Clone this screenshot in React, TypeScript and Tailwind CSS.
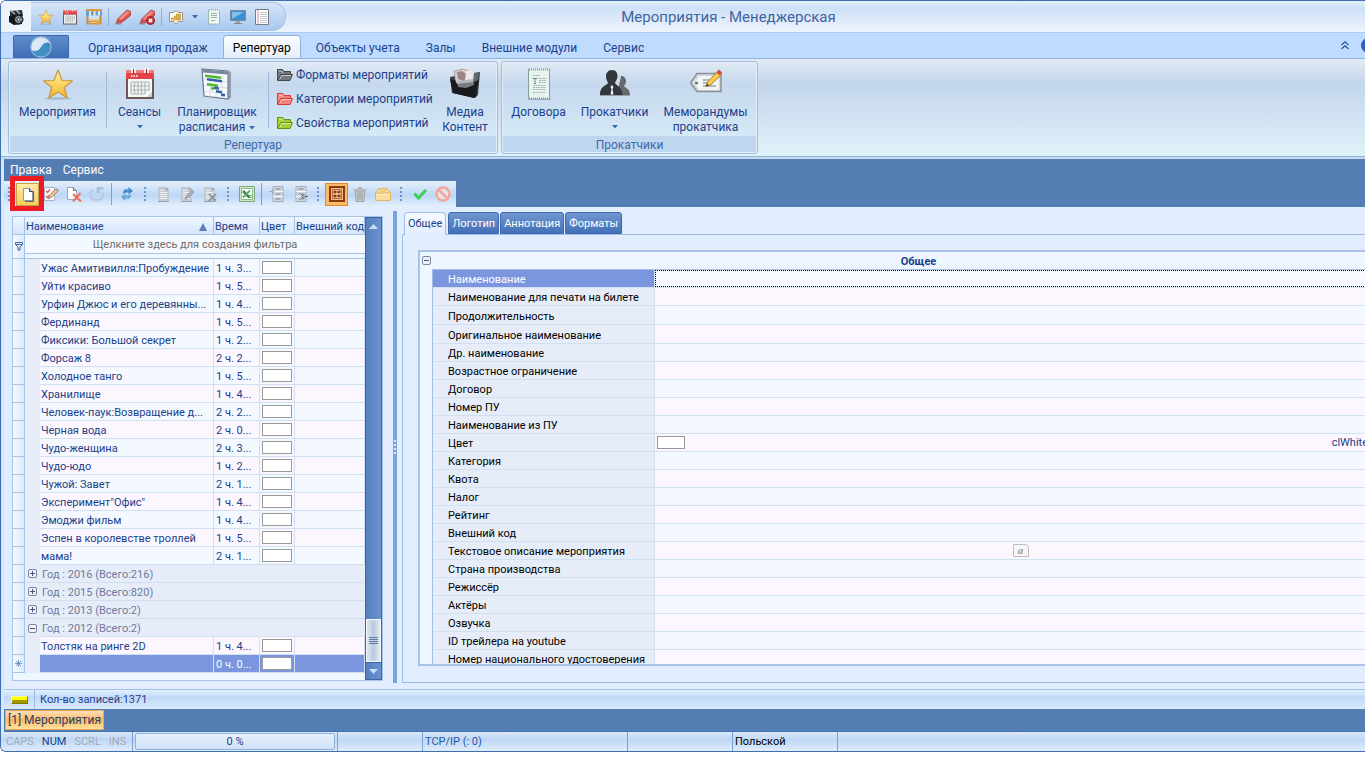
import { useState, type ReactNode } from 'react'

interface Movie { name: string; time: string }

const movies: Movie[] = [
  { name: 'Ужас Амитивилля:Пробуждение', time: '1 ч. 3...' },
  { name: 'Уйти красиво', time: '1 ч. 5...' },
  { name: 'Урфин Джюс и его деревянны...', time: '1 ч. 4...' },
  { name: 'Фердинанд', time: '1 ч. 5...' },
  { name: 'Фиксики: Большой секрет', time: '1 ч. 2...' },
  { name: 'Форсаж 8', time: '2 ч. 2...' },
  { name: 'Холодное танго', time: '1 ч. 5...' },
  { name: 'Хранилище', time: '1 ч. 4...' },
  { name: 'Человек-паук:Возвращение д...', time: '2 ч. 2...' },
  { name: 'Черная вода', time: '2 ч. 0...' },
  { name: 'Чудо-женщина', time: '2 ч. 3...' },
  { name: 'Чудо-юдо', time: '1 ч. 2...' },
  { name: 'Чужой: Завет', time: '2 ч. 1...' },
  { name: 'Эксперимент"Офис"', time: '1 ч. 4...' },
  { name: 'Эмоджи фильм', time: '1 ч. 4...' },
  { name: 'Эспен в королевстве троллей', time: '1 ч. 5...' },
  { name: 'мама!', time: '2 ч. 1...' },
]

const groups = [
  { label: 'Год : 2016 (Всего:216)', open: false },
  { label: 'Год : 2015 (Всего:820)', open: false },
  { label: 'Год : 2013 (Всего:2)', open: false },
  { label: 'Год : 2012 (Всего:2)', open: true },
]

const fields = [
  'Наименование', 'Наименование для печати на билете', 'Продолжительность', 'Оригинальное наименование',
  'Др. наименование', 'Возрастное ограничение', 'Договор', 'Номер ПУ', 'Наименование из ПУ', 'Цвет',
  'Категория', 'Квота', 'Налог', 'Рейтинг', 'Внешний код', 'Текстовое описание мероприятия',
  'Страна производства', 'Режиссёр', 'Актёры', 'Озвучка', 'ID трейлера на youtube', 'Номер национального удостоверения',
]

const ribbonTabs = ['Организация продаж', 'Репертуар', 'Объекты учета', 'Залы', 'Внешние модули', 'Сервис']
const detailTabs = ['Общее', 'Логотип', 'Аннотация', 'Форматы']

/* ---------- icons ---------- */

function Svg({ size = 16, children }: { size?: number; children: ReactNode }) {
  return <svg width={size} height={size} viewBox={`0 0 ${size} ${size}`} fill="none" aria-hidden="true" className="shrink-0">{children}</svg>
}

function Star({ size = 16 }: { size?: number }) {
  return (
    <svg width={size} height={size} viewBox="0 0 32 32" aria-hidden="true" className="shrink-0">
      <defs>
        <linearGradient id="starFill" x1="0" y1="0" x2="0" y2="1">
          <stop offset="0" stopColor="#fff3b0" /><stop offset="0.6" stopColor="#fbcf55" /><stop offset="1" stopColor="#f0b03c" />
        </linearGradient>
      </defs>
      <ellipse cx="16" cy="30.5" rx="14" ry="1.2" fill="#8f9db0" opacity=".6" />
      <path d="M16 2l4 10.5 10.500.3-8.300 6.700 3 10.500L16 24l-9.200 6 3-10.500L1.500 12.800 12 12.500z" fill="url(#starFill)" stroke="#c9983c" strokeWidth="1.200" strokeLinejoin="round" />
    </svg>
  )
}

function Calendar({ size = 16 }: { size?: number }) {
  return (
    <svg width={size} height={size} viewBox="0 0 32 32" aria-hidden="true" className="shrink-0">
      <path d="M2 3h28v28H2z" fill="#6d5559" />
      <path d="M4 11h24v18H4z" fill="#f6f8f4" />
      <path d="M2 2h28v9H2z" fill="#e2434a" />
      <path d="M2 2h28v3H2z" fill="#f07b7b" />
      <path d="M7 14h18M7 18h18M7 22h18M7 26h14M7 14v12M10.500 14v12M14 14v12M17.500 14v12M21 14v12M25 14v9" stroke="#a9b7b3" strokeWidth="1.200" fill="none" />
      <path d="M23 29l5-5v5z" fill="#c9cfcd" />
      <path d="M7 8h7" stroke="#fff" strokeWidth="1.500" strokeDasharray="1.500 1" />
      <path d="M8 0v5M11 0v5M21 0v5M24 0v5" stroke="#fff" strokeWidth="1.600" />
      <path d="M9.500 1v5M22.500 1v5" stroke="#9b2b34" strokeWidth="1" />
    </svg>
  )
}

function Planner() {
  return (
    <Svg size={32}>
      <path d="M28 3l2 1v26l-3 1z" fill="#8f9cac" />
      <path d="M1 1l26 2v28L3 28z" fill="#f7fafc" stroke="#66758a" strokeWidth="1.200" />
      <path d="M2 1.500l25 2v3l-25-2z" fill="#7487a0" />
      <path d="M9 6v23M15 7v22M21 7v23M3 11l23 3M3 17l23 3M3 23l23 3" stroke="#d5dde6" />
      <path d="M4 6.500l16 2v2.500l-16-2z" fill="#54b72b" />
      <path d="M6 10l15 2v2.500L6 12.500z" fill="#2f62a5" />
      <path d="M6 15l11 1.500V19L6 17.500z" fill="#54b72b" />
      <path d="M13 18.500l5 .8v2.500l-5-.8z" fill="#2f62a5" />
      <path d="M10 19l3 .4v2.500l-3-.4z" fill="#54b72b" />
      <path d="M15 22l6 1v2.500l-6-1z" fill="#2f62a5" />
      <path d="M20 25.500l4 .6v2.500l-4-.6z" fill="#2f62a5" />
    </Svg>
  )
}

function Folder({ dark, light }: { dark: string; light: string }) {
  return (
    <svg width="16" height="14" viewBox="0 0 16 14" fill="none" aria-hidden="true" className="shrink-0">
      <path d="M.5 12.500v-11h5l1.500 2h6.500v3" fill={light} stroke={dark} />
      <path d="M.8 12.500L4 6.500h11.500l-2.500 6z" fill={light} stroke={dark} strokeLinejoin="round" />
      <path d="M2.500 11.500l2.200-4h9.300M2 3h2.500l1.500 2" stroke="#fff" opacity=".6" />
    </svg>
  )
}

function MediaFolder() {
  return (
    <Svg size={32}>
      <path d="M1 9l5-1v16l20 4V5l5-1-2 23-3 3L3 25z" fill="#3c4148" />
      <path d="M5 3l9-2 6 2-2 14-11-1z" fill="#d9cfd0" stroke="#8b8385" strokeWidth=".6" />
      <path d="M8 4l5-1 5 4-3 6-6-2z" fill="#9b8588" />
      <path d="M17 3l7-1-1 14-7-1z" fill="#ece8e6" />
      <path d="M1 11l5 1 2 4 16-2 6-5-3 19-2 2L4 25z" fill="#17191d" />
      <path d="M8 13l16-2 1 6-8 3-8-1z" fill="#a3a8ad" opacity=".7" />
      <path d="M25 5l5-1-1 8-5 3z" fill="#5f666e" />
    </Svg>
  )
}

function Contract() {
  return (
    <Svg size={32}>
      <path d="M6 1h21v29H6z" fill="#e8f2ef" />
      <path d="M5.500 1v29.500M26.500 1v29.500" stroke="#7fa09b" />
      <path d="M6 1.500h21M6 30.500h21" stroke="#7fa09b" strokeWidth="2" strokeDasharray="1 1" />
      <path d="M9.500 10.500h5M12 10v5M11 15.500h2" stroke="#6f8d89" />
      <path d="M16 10.500h7M16 12.500h7M16 14.500h7M10 17.500h13M10 19.500h13M10 21.500h13M10 24.500h13M10 7.500h7" stroke="#a3b9b5" strokeDasharray="2 .6" />
      <path d="M5 31.500h23" stroke="#7b8a92" opacity=".5" />
    </Svg>
  )
}

function People() {
  return (
    <Svg size={32}>
      <path d="M22 8c3 0 5 2 5 5 0 2-1 4-2 5 1 2 6 2 6 9H18z" fill="#666a6f" />
      <path d="M13 2c4 0 5.500 3 5.500 6s-1.500 5-2.500 6.500c0 3 7 3 7.500 12.500H1c0-10 8-9.500 8-12.500C8 13 7 11 7 8s2-6 6-6z" fill="#33363b" />
      <path d="M13 17l1.500 2-1 2 1 5.500h-3l1-5.500-1-2z" fill="#f4f6f8" />
      <path d="M1 27.500h30" stroke="#6d7883" opacity=".6" />
    </Svg>
  )
}

function TagPencil() {
  return (
    <Svg size={32}>
      <path d="M.5 15l6.500-9.500h24v18H7z" fill="#d5d8dc" stroke="#8b9096" strokeWidth="1.500" />
      <path d="M4 15l5.500-7H29v14H9.500z" fill="#f3f4f5" />
      <circle cx="6.500" cy="15" r="1.600" fill="#6c7279" />
      <path d="M13 12h9M13 15h6M13 18h13" stroke="#787e85" />
      <path d="M16 18.500l2-5L28 3l3.500 3.500-10.500 10z" fill="#f7cf4b" stroke="#ac7f2c" />
      <path d="M26.500 4.500L29 1.500l3 3-2.500 3z" fill="#d9484f" />
      <path d="M16 18.500l1-3 2 2z" fill="#4c3b22" />
    </Svg>
  )
}

function Page() {
  return (
    <Svg>
      <path d="M13 5v10H5" stroke="#2d3f63" strokeWidth="1.600" />
      <path d="M3.500 2.500h6l3 3v9h-9z" fill="#fff" stroke="#8d9bb3" />
      <path d="M9.500 2.500v3h3" fill="#c9d4e4" stroke="#2d3f63" />
    </Svg>
  )
}

function PageEdit() {
  return (
    <Svg>
      <path d="M1.500 1.500h10v13h-10z" fill="#fafbfe" stroke="#a7b3c7" />
      <path d="M3 5l1.500 1.500L7 3.500M3 10l1.500 1.500L6 9.500" stroke="#dc5a55" strokeWidth="1.300" />
      <path d="M5 13l1.500-4L13 2.500l2.500 2L9 11z" fill="#f3c08b" stroke="#8d7361" strokeWidth=".8" />
      <path d="M12 3.500l1.500-1.500 2.500 2-1.500 1.500z" fill="#b9a2a4" />
    </Svg>
  )
}

function PageDelete() {
  return (
    <Svg>
      <path d="M1.500 1.500h6l3 3v9h-9z" fill="#fff" stroke="#9aa8bf" />
      <path d="M7.500 1.500v3h3" stroke="#5f708f" />
      <path d="M7 8l8 7.500M14.500 7L7 15.500" stroke="#f2705c" strokeWidth="2" />
    </Svg>
  )
}

function MutedPage({ accent }: { accent?: 'edit' | 'delete' }) {
  return (
    <Svg>
      <path d="M2 1h8l3 3v11H2z" fill="#c3c9d0" />
      <path d="M10 1v3h3z" fill="#9ba2aa" />
      <path d="M4 4.500h4M4 6.500h7M4 8.500h7M4 10.500h7M4 12.500h7" stroke="#f0f2f4" />
      <path d="M2 15.500h11" stroke="#9ba2aa" />
      {accent === 'edit' && <path d="M6 13l1.500-3.500L13 4l2 2-5.500 5.500z" fill="#aab0b7" stroke="#8e959d" strokeWidth=".8" />}
      {accent === 'delete' && <path d="M7 8l7 7M14 8l-7 7" stroke="#939aa2" strokeWidth="2" />}
    </Svg>
  )
}

function Marker({ remove }: { remove?: boolean }) {
  return (
    <Svg>
      <path d="M1 14.500L3 9.500 12 1l3.500 1.500v4L6 14z" fill="#d8514c" stroke="#a73a38" strokeWidth=".7" />
      <path d="M3.500 9.500L12 2l3 1-8.500 8z" fill="#ee8b80" />
      <path d="M0 15h6" stroke="#7d8aa0" />
      {remove && <circle cx="11.500" cy="11.500" r="4" fill="#c8323c" stroke="#8e1f28" />}
      {remove && <path d="M9.800 9.800l3.400 3.400M13.200 9.800l-3.400 3.400" stroke="#fff" strokeWidth="1.500" />}
    </Svg>
  )
}

function Cabinet({ mark }: { mark: 'left' | 'right' }) {
  return (
    <Svg>
      <path d="M4 .500h10v15H4z" fill="#d3d8dd" stroke="#a3abb4" />
      <path d="M4 5.500h10M4 10.500h10" stroke="#f5f7f9" />
      <path d="M6.500 3h5M6.500 8h5M6.500 13h5" stroke="#949da7" strokeWidth="1.400" />
      {mark === 'left' && <path d="M0 5.500h3M3.500 3.500v4l2.500-2z" stroke="#a3abb4" fill="#fff" />}
      {mark === 'right' && <path d="M16 10.500h-3M12 8.500v4L9 10.500z" stroke="#5e6a78" fill="#e7eaed" />}
    </Svg>
  )
}

const Camera = () => (
  <Svg size={18}>
    <path d="M3 3l12-1 1 6-13 2z" fill="#2b2f33" />
    <path d="M2 8l13-2v10l-8 1-5-3z" fill="#15181b" />
    <path d="M3 2l5 4M9 2l4 4" stroke="#b9c3ca" strokeWidth="1.200" />
    <circle cx="11.500" cy="11.500" r="4.500" fill="#4b545b" stroke="#111" />
    <circle cx="11.500" cy="11.500" r="2.700" stroke="#dfe5e9" strokeDasharray="1.500 1" />
    <circle cx="11.500" cy="11.500" r="1" fill="#f2f5f6" />
  </Svg>
)

const Shop = () => (
  <Svg>
    <path d="M1.500 6v9.500M14.500 6v9.500" stroke="#c88b3c" strokeWidth="2" />
    <path d="M3 10h10v2H3z" fill="#f0c27c" />
    <path d="M3 12h10v3.500H3z" fill="#d58e38" />
    <path d="M3 6h10v4H3z" fill="#cfe6f7" />
    <path d="M0 0h16v2H0z" fill="#dd9a43" />
    <path d="M0 2h16v4H0z" fill="#f8e6c4" />
    <path d="M0 2h3v4.500H0zM5 2h2.500v4.500H5zM9.500 2H12v4.500H9.500zM14 2h2v4.500h-2z" fill="#5ea2dc" />
    <path d="M4 13.500h8" stroke="#f5d39a" />
  </Svg>
)

const ChartTag = () => (
  <Svg>
    <path d="M1.500 3.500h4l2.500-2 2.500 2h4v9h-4l-2.500 2.500-2.500-2.500h-4z" fill="#fdfaf2" stroke="#9a9282" />
    <path d="M3.500 11v-2h3v-2h2v-2h4v6z" fill="#efc56a" stroke="#c4993f" strokeWidth=".8" />
    <path d="M6.500 9h6M8.500 7h4M8.500 7v4M10.500 5v6" stroke="#c4993f" strokeWidth=".7" />
  </Svg>
)

const Receipt = () => (
  <Svg>
    <path d="M2.500 1v14.500M13.500 1v14.500" stroke="#9db8b1" />
    <path d="M3 1h10v14H3z" fill="#eef6f2" />
    <path d="M3 1h10M3 15h10" stroke="#7d9b93" strokeDasharray="1 1" />
    <path d="M5 4.500h6M5 6.500h6M5 8.500h6M5 11.500h4" stroke="#9db4ae" />
  </Svg>
)

const Monitor = () => (
  <Svg>
    <path d="M.5 1.500h15v10H.5z" fill="#3b8fd0" stroke="#7f8a96" />
    <path d="M2 3h12L2 10z" fill="#7fc0ea" />
    <path d="M6 12h4v2H6z" fill="#98a3ad" />
    <path d="M4 14.500h8" stroke="#7f8a96" />
  </Svg>
)

const Notes = () => (
  <Svg>
    <path d="M1.500.5h13v15h-13z" fill="#fff" stroke="#767a86" />
    <path d="M6 3.500h7M6 5.500h7M6 7.500h7M6 9.500h7M6 11.500h7M6 13.500h7" stroke="#b4b8c2" strokeWidth=".8" />
    <path d="M4 1v14" stroke="#d98a90" />
  </Svg>
)

const Undo = () => (
  <Svg>
    <path d="M3.500 4A6 6 0 1 0 13 6" stroke="#a9bdd8" strokeWidth="2.600" />
    <path d="M3.500 4A6 6 0 1 0 13 6" stroke="#e4ecf6" strokeWidth=".8" />
    <path d="M8 6.500v-5h6V3H10.500v3.500z" fill="#b9cae0" stroke="#9db1cd" strokeWidth=".7" />
  </Svg>
)

const Refresh = () => (
  <Svg>
    <path d="M4 7.500V5.500L6.500 3h3V1l4.500 4-4.500 3.500V6.500H7z" fill="#3f86c8" />
    <path d="M12 8.500v2L9.500 13h-3v2L2 11l4.500-3.500v2H9z" fill="#63a6dc" />
    <path d="M7 4h3M9 12H6" stroke="#b6d8f2" strokeWidth=".8" />
  </Svg>
)

const Excel = () => (
  <Svg>
    <path d="M.5.500h15v15H.5z" fill="#cfe5cd" stroke="#7aa878" />
    <path d="M2.500 2.500h11v11h-11z" fill="#fff" stroke="#8fba8d" />
    <path d="M4 5l6.500 6.500" stroke="#3a8a42" strokeWidth="2.600" />
    <path d="M11 4.500L4 11.500" stroke="#63a866" strokeWidth="2" />
    <path d="M10 9.500h3M10 11.500h3" stroke="#7cb37b" />
  </Svg>
)

const Abacus = () => (
  <Svg>
    <path d="M1 1h14v14H1z" fill="#f3bd8a" stroke="#8c3b10" strokeWidth="2" />
    <path d="M3.500 3.500h9v9h-9z" stroke="#c2693a" />
    <path d="M4 6h8M4 10h8" stroke="#8c3b10" />
    <path d="M5 6h2M9 6h2M5 10h2M9 10h2" stroke="#8c3b10" strokeWidth="2.400" />
  </Svg>
)

const Trash = () => (
  <Svg>
    <path d="M3 5h10l-1 10.500H4z" fill="#c3c5c7" stroke="#a5a8ab" />
    <path d="M1.500 3h13v1.500h-13zM6 1h4v2H6z" fill="#b3b6b9" />
    <path d="M6 6.500v7M8 6.500v7M10 6.500v7" stroke="#999da1" />
  </Svg>
)

const Box = () => (
  <Svg>
    <path d="M.5 7L4 2.500h8L15.500 7v7.500H.5z" fill="#f9dea0" stroke="#e2b45f" />
    <path d="M.5 7h15M4 2.500l2 2.500h4l2-2.500" stroke="#e2b45f" />
    <path d="M2 8.500h12" stroke="#fff1cc" />
  </Svg>
)

const Check = () => <Svg><path d="M2.500 7.500L6.500 12l7.500-8" stroke="#3fcf55" strokeWidth="3" /></Svg>

const Forbidden = () => (
  <Svg>
    <circle cx="8" cy="8" r="6.500" fill="#e9e3ea" stroke="#f3a49b" strokeWidth="2.400" />
    <path d="M3.500 3.500l9 9" stroke="#f3a49b" strokeWidth="2.500" />
  </Svg>
)

const Caret = () => <svg width="6" height="4" viewBox="0 0 6 4" aria-hidden="true" className="shrink-0"><path d="M0 0h6L3 3.500z" fill="#3d6bb3" /></svg>

function Expander({ open }: { open?: boolean }) {
  return (
    <svg width="9" height="9" viewBox="0 0 9 9" fill="none" aria-hidden="true">
      <rect x=".5" y=".5" width="8" height="8" rx="1.500" fill="#eef0f7" stroke="#7d86a3" />
      <path d={open ? 'M2 4.500h5' : 'M2 4.500h5M4.500 2v5'} stroke="#4a5578" />
    </svg>
  )
}

/* ---------- ribbon ---------- */

function BigButton({ icon, lines, caret, width }: { icon: ReactNode; lines: string[]; caret?: 'inline' | 'below'; width: string }) {
  return (
    <button className={`flex flex-col items-center pt-[6px] text-[12px] leading-[15px] whitespace-nowrap ${width}`}>
      {icon}
      <span className="mt-[5px]">{lines[0]}</span>
      {lines[1] && <span className="flex items-center gap-1">{lines[1]}{caret === 'inline' && <Caret />}</span>}
      {caret === 'below' && <span className="mt-[5px]"><Caret /></span>}
    </button>
  )
}

function RibbonGroup({ title, children }: { title: string; children: ReactNode }) {
  return (
    <section className="flex flex-col rounded-[3px] border border-[#9fbfdf] bg-linear-to-b from-[#e0eaf4] via-[#c5d8ee] via-25% to-[#dbeef8] shadow-[inset_0_0_0_1px_#e4eef8]">
      <div className="flex h-[74px]">{children}</div>
      <h2 className="mx-px mb-px h-[16px] bg-[#bfd6ef] text-center text-[12px] leading-[18px] text-[#3e6aaa]">{title}</h2>
    </section>
  )
}

function Separator() {
  return <span className="mt-[10px] h-[56px] w-px bg-[#9ebbdd]" />
}

/* ---------- toolbar ---------- */

function ToolSegment({ children }: { children: ReactNode }) {
  return (
    <div className="flex h-[26px] items-center bg-linear-to-b from-[#e6f0fc] via-[#bdd7f6] via-55% to-[#e4f0fd] pr-[2px]">
      <span className="flex w-[12px] flex-col gap-[2px] pl-[4px]">
        {[0, 1, 2, 3].map(i => <i key={i} className="h-[2px] w-[2px] bg-[#6f96cc]" />)}
      </span>
      {children}
    </div>
  )
}

function Tool({ label, active, children }: { label: string; active?: 'yellow' | 'orange'; children: ReactNode }) {
  const look = active === 'yellow'
    ? 'border border-[#c2a24c] bg-linear-to-b from-[#fdeaa6] to-[#f6cf57]'
    : active === 'orange' ? 'border border-[#e08a2c] bg-[#fcb968]' : ''
  return (
    <button aria-label={label} title={label} className={`flex h-[23px] w-[23px] items-center justify-center ${look}`}>
      {children}
    </button>
  )
}

/* ---------- grid ---------- */

function GridCells({ row }: { row: Movie }) {
  const line = 'border-r border-b border-[#d0e0f0] p-0'
  return (
    <>
      <td className={`${line} overflow-hidden pt-[2px] pl-px leading-[15px] whitespace-nowrap`}>{row.name}</td>
      <td className={`${line} overflow-hidden pt-[2px] pl-[2px] leading-[15px] whitespace-nowrap`}>{row.time}</td>
      <td className={line}><div className="mx-auto h-[13px] w-[30px] border border-[#999] bg-white" /></td>
      <td className={line} />
    </>
  )
}

function MovieGrid() {
  const [filter, setFilter] = useState('')
  const gutter = 'border-r border-b border-[#a6c4e8] bg-linear-to-r from-[#f4f9ff] to-[#dbeafb] p-0'
  return (
    <div className="flex border border-[#a9c4e6] bg-[#eef6ff]">
      <div className="w-[352px] text-[11px] leading-[17px] text-[#1c4089]">
        <table className="w-full table-fixed border-separate border-spacing-0">
          <colgroup>
            <col className="w-[12px]" /><col className="w-[15px]" /><col className="w-[174px]" />
            <col className="w-[46px]" /><col className="w-[35px]" /><col className="w-[70px]" />
          </colgroup>
          <thead>
            <tr className="h-[18px] bg-linear-to-b from-[#eff6ff] to-[#d3e5fb] text-left leading-[15px] [&>th]:border-r [&>th]:border-b [&>th]:border-[#a6c4e8] [&>th]:p-0 [&>th]:pt-[2px] [&>th]:pl-px [&>th]:font-normal">
              <th />
              <th colSpan={2} aria-sort="ascending">
                <span className="flex items-center justify-between pr-[6px]">
                  Наименование
                  <svg width="8" height="8" viewBox="0 0 8 8" aria-hidden="true"><path d="M4 0l4 8H0z" fill="#5b7fb5" /></svg>
                </span>
              </th>
              <th>Время</th>
              <th>Цвет</th>
              <th className="whitespace-nowrap">Внешний код</th>
            </tr>
            <tr className="h-[19px]">
              <td rowSpan={2} className={gutter}>
                <svg width="8" height="9" viewBox="0 0 8 9" fill="none" className="mx-auto" aria-hidden="true"><path d="M.5.500h7v2L5 5v3H3V5L.5 2.500zM1 2.500h6" stroke="#41659f" /></svg>
              </td>
              <td colSpan={5} className="border-b border-[#a6c4e8] bg-[#f4f9ff] p-0">
                <input
                  aria-label="Фильтр"
                  value={filter}
                  onChange={e => setFilter(e.target.value)}
                  placeholder="Щелкните здесь для создания фильтра"
                  className="block h-[18px] w-full bg-transparent text-center outline-none placeholder:text-[#6d6d6d] placeholder:opacity-100"
                />
              </td>
            </tr>
            <tr className="h-[5px]"><td colSpan={5} className="border-b border-[#a6c4e8] p-0 leading-[0]" /></tr>
          </thead>
          <tbody>
            {movies.map((m, i) => (
              <tr key={m.name} className={`h-[18px] ${i % 2 ? 'bg-[#fcf7fe]' : 'bg-[#f3f9ff]'}`}>
                <td className={gutter} />
                <td className="bg-[#e6edf8] p-0" />
                <GridCells row={m} />
              </tr>
            ))}
            {groups.map(g => (
              <tr key={g.label} className="h-[18px] bg-[#e6edf8] text-[#6f7a9c]">
                <td className={gutter} />
                <td className={`p-0 pl-[3px] ${g.open ? '' : 'border-b border-[#d0e0f0]'}`}>
                  <button aria-label={g.open ? 'Свернуть' : 'Развернуть'} className="block"><Expander open={g.open} /></button>
                </td>
                <td colSpan={4} className="border-b border-[#d0e0f0] p-0 pt-[2px] pl-[2px] leading-[15px]">{g.label}</td>
              </tr>
            ))}
            <tr className="h-[18px] bg-[#fcf7fe]">
              <td className={gutter} />
              <td className="bg-[#e6edf8] p-0" />
              <GridCells row={{ name: 'Толстяк на ринге 2D', time: '1 ч. 4...' }} />
            </tr>
            <tr className="h-[18px] bg-[#7b96df] text-white">
              <td className={gutter}>
                <svg width="7" height="7" viewBox="0 0 7 7" className="mx-auto" aria-hidden="true"><path d="M3.500 0v7M0 3.500h7M1 1l5 5M6 1L1 6" stroke="#41659f" strokeWidth=".6" /></svg>
              </td>
              <td className="bg-[#e6edf8] p-0" />
              <GridCells row={{ name: '', time: '0 ч. 0...' }} />
            </tr>
          </tbody>
        </table>
      </div>
      <div className="flex w-[17px] flex-col border border-[#3c669f] bg-linear-to-r from-[#557fbd] to-[#6a94d0]">
        <button aria-label="Вверх" className="flex h-[16px] items-center justify-center"><svg width="9" height="5" viewBox="0 0 9 5"><path d="M0 5h9L4.500 0z" fill="#c9dcf3" /></svg></button>
        <div className="flex-1" />
        <div className="flex h-[43px] flex-col items-center justify-center gap-px border border-[#f4f8fd] bg-linear-to-r from-[#dde6f0] via-[#b9cadd] to-[#e3ebf4]">
          {[0, 1, 2, 3].map(i => <i key={i} className="h-px w-[9px] bg-[#5b7ba8]" />)}
        </div>
        <button aria-label="Вниз" className="flex h-[17px] items-center justify-center border-t border-[#3c669f]"><svg width="9" height="5" viewBox="0 0 9 5"><path d="M0 0h9L4.500 5z" fill="#c9dcf3" /></svg></button>
      </div>
    </div>
  )
}

function fieldHeight(name: string) {
  return name === 'Продолжительность' || name === 'Оригинальное наименование' ? 'h-[19px]' : 'h-[18px]'
}

function Details() {
  return (
    <div className="ml-[15px] flex h-[416px] w-[calc(100%+8px)] flex-col overflow-hidden border-2 border-[#a9c4e6] bg-[#eef6ff] text-[11px] leading-[17px]">
      <div className="flex h-[17px] shrink-0 items-center">
        <button aria-label="Свернуть" className="ml-[2px]"><Expander open /></button>
        <h3 className="flex-1 pt-px pl-5 text-center font-bold text-[#15428b]">Общее</h3>
      </div>
      <table className="ml-[12px] table-fixed border-separate border-spacing-0 border-t border-l border-[#a3bfe2]">
        <colgroup><col className="w-[222px]" /><col /></colgroup>
        <tbody>
          {fields.map((name, i) => (
            <tr key={name} className={fieldHeight(name)}>
              <th scope="row" className={`border-r border-b border-[#cfe0f1] p-0 pt-[2px] pl-[15px] text-left leading-[15px] font-normal whitespace-nowrap ${i === 0 ? 'bg-[#7b96df] text-white' : 'bg-[#e6edf8] text-black'}`}>
                {name}
              </th>
              <td className={`border-b border-[#cfe0ee] p-0 ${i % 2 ? 'bg-[#fcf7fe]' : 'bg-[#f3f9ff]'}`}>
                {i === 0 && <input aria-label={name} className="block h-[17px] w-full border border-dotted border-black bg-[#f7faff] px-1 outline-none" />}
                {name === 'Цвет' && (
                  <div className="flex items-center justify-between pr-[18px] pl-[2px] text-[#1c4089]">
                    <span className="h-[13px] w-[28px] border border-[#999] bg-white" />
                    <span>clWhite</span>
                  </div>
                )}
                {name === 'Текстовое описание мероприятия' && (
                  <span className="mx-auto flex h-[13px] w-[16px] items-center justify-center rounded-tr-[4px] border border-[#bdbdbd] bg-[#f7f7f7] font-['Liberation_Serif',serif] leading-[11px] font-bold text-[#999] italic">a</span>
                )}
              </td>
            </tr>
          ))}
        </tbody>
      </table>
    </div>
  )
}

export default function App() {
  const [ribbonTab, setRibbonTab] = useState('Репертуар')
  const [detailTab, setDetailTab] = useState('Общее')

  return (
    <div className="min-h-screen w-full overflow-hidden bg-white font-[Roboto,'Noto_Sans',sans-serif] text-[#1d3f8c]">
      <div className="flex flex-col overflow-hidden rounded-l-[6px] border-y border-l border-[#3f6fae] bg-[#d6e6fb]">

        {/* Title bar with quick access */}
        <header className="flex h-[32px] items-center border-b border-[#a9cbf3] bg-linear-to-b from-[#e3effb] via-[#cfe1f8] via-25% to-[#edf4fd]">
          <div className="flex h-full w-[30px] items-center justify-center bg-[#edf4fd]"><Camera /></div>
          <nav className="flex h-[29px] items-center rounded-r-[14px] border-y border-r border-[#a3c0e4] bg-linear-to-b from-[#d6e5f8] to-[#a9c8ee] pr-[11px] pl-[3px] [&>button]:flex [&>button]:h-[24px] [&>button]:w-[24px] [&>button]:items-center [&>button]:justify-center">
            <button aria-label="Мероприятия"><Star /></button>
            <button aria-label="Сеансы"><Calendar /></button>
            <button aria-label="Кассы"><Shop /></button>
            <span className="mx-[2px] h-[18px] w-px bg-[#8fb0da]" />
            <button aria-label="Отметить"><Marker /></button>
            <button aria-label="Снять отметку"><Marker remove /></button>
            <span className="mx-[2px] h-[18px] w-px bg-[#8fb0da]" />
            <button aria-label="Отчеты"><ChartTag /></button>
            <span className="flex w-[14px] justify-center"><Caret /></span>
            <button aria-label="Договора"><Receipt /></button>
            <button aria-label="Экран"><Monitor /></button>
            <button aria-label="Журнал"><Notes /></button>
          </nav>
          <h1 className="flex-1 pt-[2px] pr-[194px] text-center text-[15px] text-[#41659f]">Мероприятия - Менеджерская</h1>
        </header>

        {/* Ribbon tabs */}
        <div className="flex h-[26px] items-end border-b border-[#8db2e3] bg-[#bfdbff] pl-[12px] text-[12px]">
          <button aria-label="Меню" className="mr-[6px] flex h-[23px] w-[56px] items-center justify-center rounded-t-[2px] border border-b-0 border-[#3c66a8] bg-linear-to-b from-[#5e8ccb] to-[#3f6db5]">
            <svg width="22" height="22" viewBox="0 0 22 22" aria-hidden="true">
              <circle cx="11" cy="11" r="10.500" fill="#dbe9f5" />
              <path d="M21.500 11A10.500 10.500 0 0 1 1 14c4 2 8 1 10-3s6-6 9-3.500c1 1 1.500 2 1.500 3.500z" fill="#3f8fc4" />
              <circle cx="11" cy="11" r="10" fill="none" stroke="#8db9dd" />
            </svg>
          </button>
          {ribbonTabs.map(tab => (
            <button
              key={tab}
              onClick={() => setRibbonTab(tab)}
              className={ribbonTab === tab
                ? 'mx-[2px] h-[23px] rounded-t-[4px] border border-b-0 border-[#8db2e3] bg-linear-to-b from-[#fbfdff] to-[#e6eef7] px-[9px] pt-px text-black'
                : 'h-[23px] px-[13px] pt-[2px]'}
            >
              {tab}
            </button>
          ))}
          <div className="-mr-[12px] ml-auto flex items-center gap-[12px] self-center">
            <button aria-label="Свернуть ленту"><svg width="8" height="9" viewBox="0 0 8 9" fill="none"><path d="M.5 4L4 .8 7.500 4M.5 8L4 4.800 7.500 8" stroke="#2f62a5" strokeWidth="1.400" /></svg></button>
            <button aria-label="Справка" className="h-[15px] w-[16px] rounded-full bg-[#2f5fc4]" />
          </div>
        </div>

        {/* Ribbon */}
        <div className="flex gap-[3px] bg-linear-to-b from-[#e3ebf3] via-[#c4d6ec] via-25% to-[#e0f2f9] pt-[2px] pb-[2px] pl-[7px]">
          <RibbonGroup title="Репертуар">
            <BigButton width="w-[97px]" icon={<Star size={32} />} lines={['Мероприятия']} />
            <Separator />
            <BigButton width="w-[65px]" icon={<Calendar size={32} />} lines={['Сеансы']} caret="below" />
            <BigButton width="w-[90px]" icon={<Planner />} lines={['Планировщик', 'расписания']} caret="inline" />
            <span className="w-[6px]" />
            <Separator />
            <div className="flex w-[164px] flex-col pt-px pl-[8px] text-[12px] whitespace-nowrap [&>button]:flex [&>button]:h-[24px] [&>button]:items-center [&>button]:gap-[3px]">
              <button><Folder dark="#45484d" light="#75797f" />Форматы мероприятий</button>
              <button><Folder dark="#d93a34" light="#f5837c" />Категории мероприятий</button>
              <button><Folder dark="#5c9612" light="#a5d02f" />Свойства мероприятий</button>
            </div>
            <BigButton width="w-[64px]" icon={<MediaFolder />} lines={['Медиа', 'Контент']} />
          </RibbonGroup>
          <RibbonGroup title="Прокатчики">
            <BigButton width="w-[73px]" icon={<Contract />} lines={['Договора']} />
            <BigButton width="w-[79px]" icon={<People />} lines={['Прокатчики']} caret="below" />
            <BigButton width="w-[103px]" icon={<TagPencil />} lines={['Меморандумы', 'прокатчика']} />
          </RibbonGroup>
        </div>
        <div className="h-[3px] border-t border-[#8fb4dc] bg-[#c6d8ee]" />

        <main className="ml-[3px] flex flex-col bg-[#e2eeff]">
          {/* Menu and toolbar */}
          <div className="bg-[#547db3]">
            <nav className="flex h-[22px] items-center gap-[11px] pl-[6px] text-[12px] text-white">
              <button>Правка</button>
              <button>Сервис</button>
            </nav>
            <div className="relative flex">
              <ToolSegment>
                <Tool label="Создать" active="yellow"><Page /></Tool>
                <Tool label="Изменить"><PageEdit /></Tool>
                <Tool label="Удалить"><PageDelete /></Tool>
                <Tool label="Отменить"><Undo /></Tool>
                <span className="mx-[3px] h-[22px] w-px bg-[#7ba0d4]" />
                <Tool label="Обновить"><Refresh /></Tool>
              </ToolSegment>
              <ToolSegment>
                <Tool label="Просмотр"><MutedPage /></Tool>
                <Tool label="Правка документа"><MutedPage accent="edit" /></Tool>
                <Tool label="Удалить документ"><MutedPage accent="delete" /></Tool>
              </ToolSegment>
              <ToolSegment>
                <Tool label="Экспорт в Excel"><Excel /></Tool>
                <span className="mx-[3px] h-[22px] w-px bg-[#7ba0d4]" />
                <Tool label="Развернуть все"><Cabinet mark="left" /></Tool>
                <Tool label="Свернуть все"><Cabinet mark="right" /></Tool>
              </ToolSegment>
              <ToolSegment>
                <Tool label="Счеты" active="orange"><Abacus /></Tool>
                <Tool label="Корзина"><Trash /></Tool>
                <Tool label="Архив"><Box /></Tool>
              </ToolSegment>
              <ToolSegment>
                <Tool label="Принять"><Check /></Tool>
                <Tool label="Отклонить"><Forbidden /></Tool>
              </ToolSegment>
              <span className="pointer-events-none absolute -top-[5px] left-[6px] h-[35px] w-[34px] border-[5px] border-[#ed1c24]" />
            </div>
          </div>

          {/* Work area */}
          <div className="flex border-b border-[#a3c0e6] pb-[6px]">
            <div className="pt-[9px] pl-[8px]">
              <div className="flex h-[465px] [&>div]:flex-1"><MovieGrid /></div>
            </div>
            <div className="mt-[4px] mr-[5px] ml-[10px] flex w-[4px] flex-col items-center justify-center gap-[2px] bg-[#79a3dd]">
              {[0, 1, 2, 3].map(i => <i key={i} className="h-[2px] w-[2px] bg-[#dbe8f9]" />)}
            </div>
            <div className="flex min-w-0 flex-1 flex-col">
              <div className="relative z-10 mt-[5px] -mb-px flex h-[23px] items-end gap-px pl-[2px] text-[11px]">
                {detailTabs.map(tab => (
                  <button
                    key={tab}
                    onClick={() => setDetailTab(tab)}
                    className={detailTab === tab
                      ? 'mr-px h-[23px] rounded-t-[4px] border border-b-0 border-[#9dbde6] bg-linear-to-b from-[#f8fbff] to-[#e2eeff] px-[3px] pt-px'
                      : 'mb-px h-[22px] rounded-t-[3px] border border-[#3d68ab] bg-linear-to-b from-[#7197d0] to-[#4370b6] px-[3px] pt-[3px] text-white'}
                  >
                    {tab}
                  </button>
                ))}
              </div>
              <div className="border border-r-0 border-[#9dbde6] pt-[15px] pb-[16px]">
                <Details />
              </div>
            </div>
          </div>

          <div className="flex h-[19px] items-center bg-linear-to-b from-[#e3effc] via-[#c0d9f7] via-40% to-[#dceafb] text-[11px]">
            <span className="ml-[7px] h-[8px] w-[17px] border border-t-[#ffff80] border-r-[#7d7a00] border-b-[#7d7a00] border-l-[#ffff80] bg-linear-to-b from-[#ffff00] from-50% to-[#a09c00] to-50%" />
            <span className="ml-[6px] h-full w-px bg-[#9dbde6]" />
            <span className="pt-[2px] pl-[5px]">Кол-во записей:1371</span>
          </div>
          <div className="flex h-[23px] border-b border-[#4373b0] bg-[#547db3]">
            <button className="my-px ml-px border border-[#e9a75c] bg-linear-to-b from-[#fde0b8] via-[#fbb963] via-50% to-[#fde2a0] px-[2px] text-[12px] whitespace-nowrap text-[#2b3f6b]">[1] Мероприятия</button>
          </div>
        </main>

        {/* Status bar */}
        <footer className="flex h-[19px] items-center bg-linear-to-b from-[#dbe8f9] via-[#bfd8f6] via-40% to-[#e0ecfb] text-[11px] leading-[20px]">
          <div className="flex w-[131px] gap-[8px] pl-[5px] text-[#a3a9b3]">
            <span>CAPS</span><span className="text-[#15428b]">NUM</span><span>SCRL</span><span>INS</span>
          </div>
          <div className="flex h-full w-[206px] items-center border-x border-[#7ba0d4] px-[2px]">
            <div role="progressbar" aria-label="Выполнение" aria-valuenow={0} className="h-[17px] flex-1 rounded-[2px] border border-[#8fb0dc] bg-linear-to-b from-[#e6f0fc] to-[#cfe1f8] text-center leading-[15px]">0 %</div>
          </div>
          <div className="h-full w-[85px] border-r border-[#7ba0d4]" />
          <div className="h-full w-[205px] border-r border-[#7ba0d4] pl-[2px] text-[#2458a5]">TCP/IP (: 0)</div>
          <div className="h-full w-[105px] border-r border-[#7ba0d4]" />
          <div className="h-full w-[105px] border-r border-[#7ba0d4] pl-[2px] text-black">Польской</div>
        </footer>
      </div>
    </div>
  )
}
